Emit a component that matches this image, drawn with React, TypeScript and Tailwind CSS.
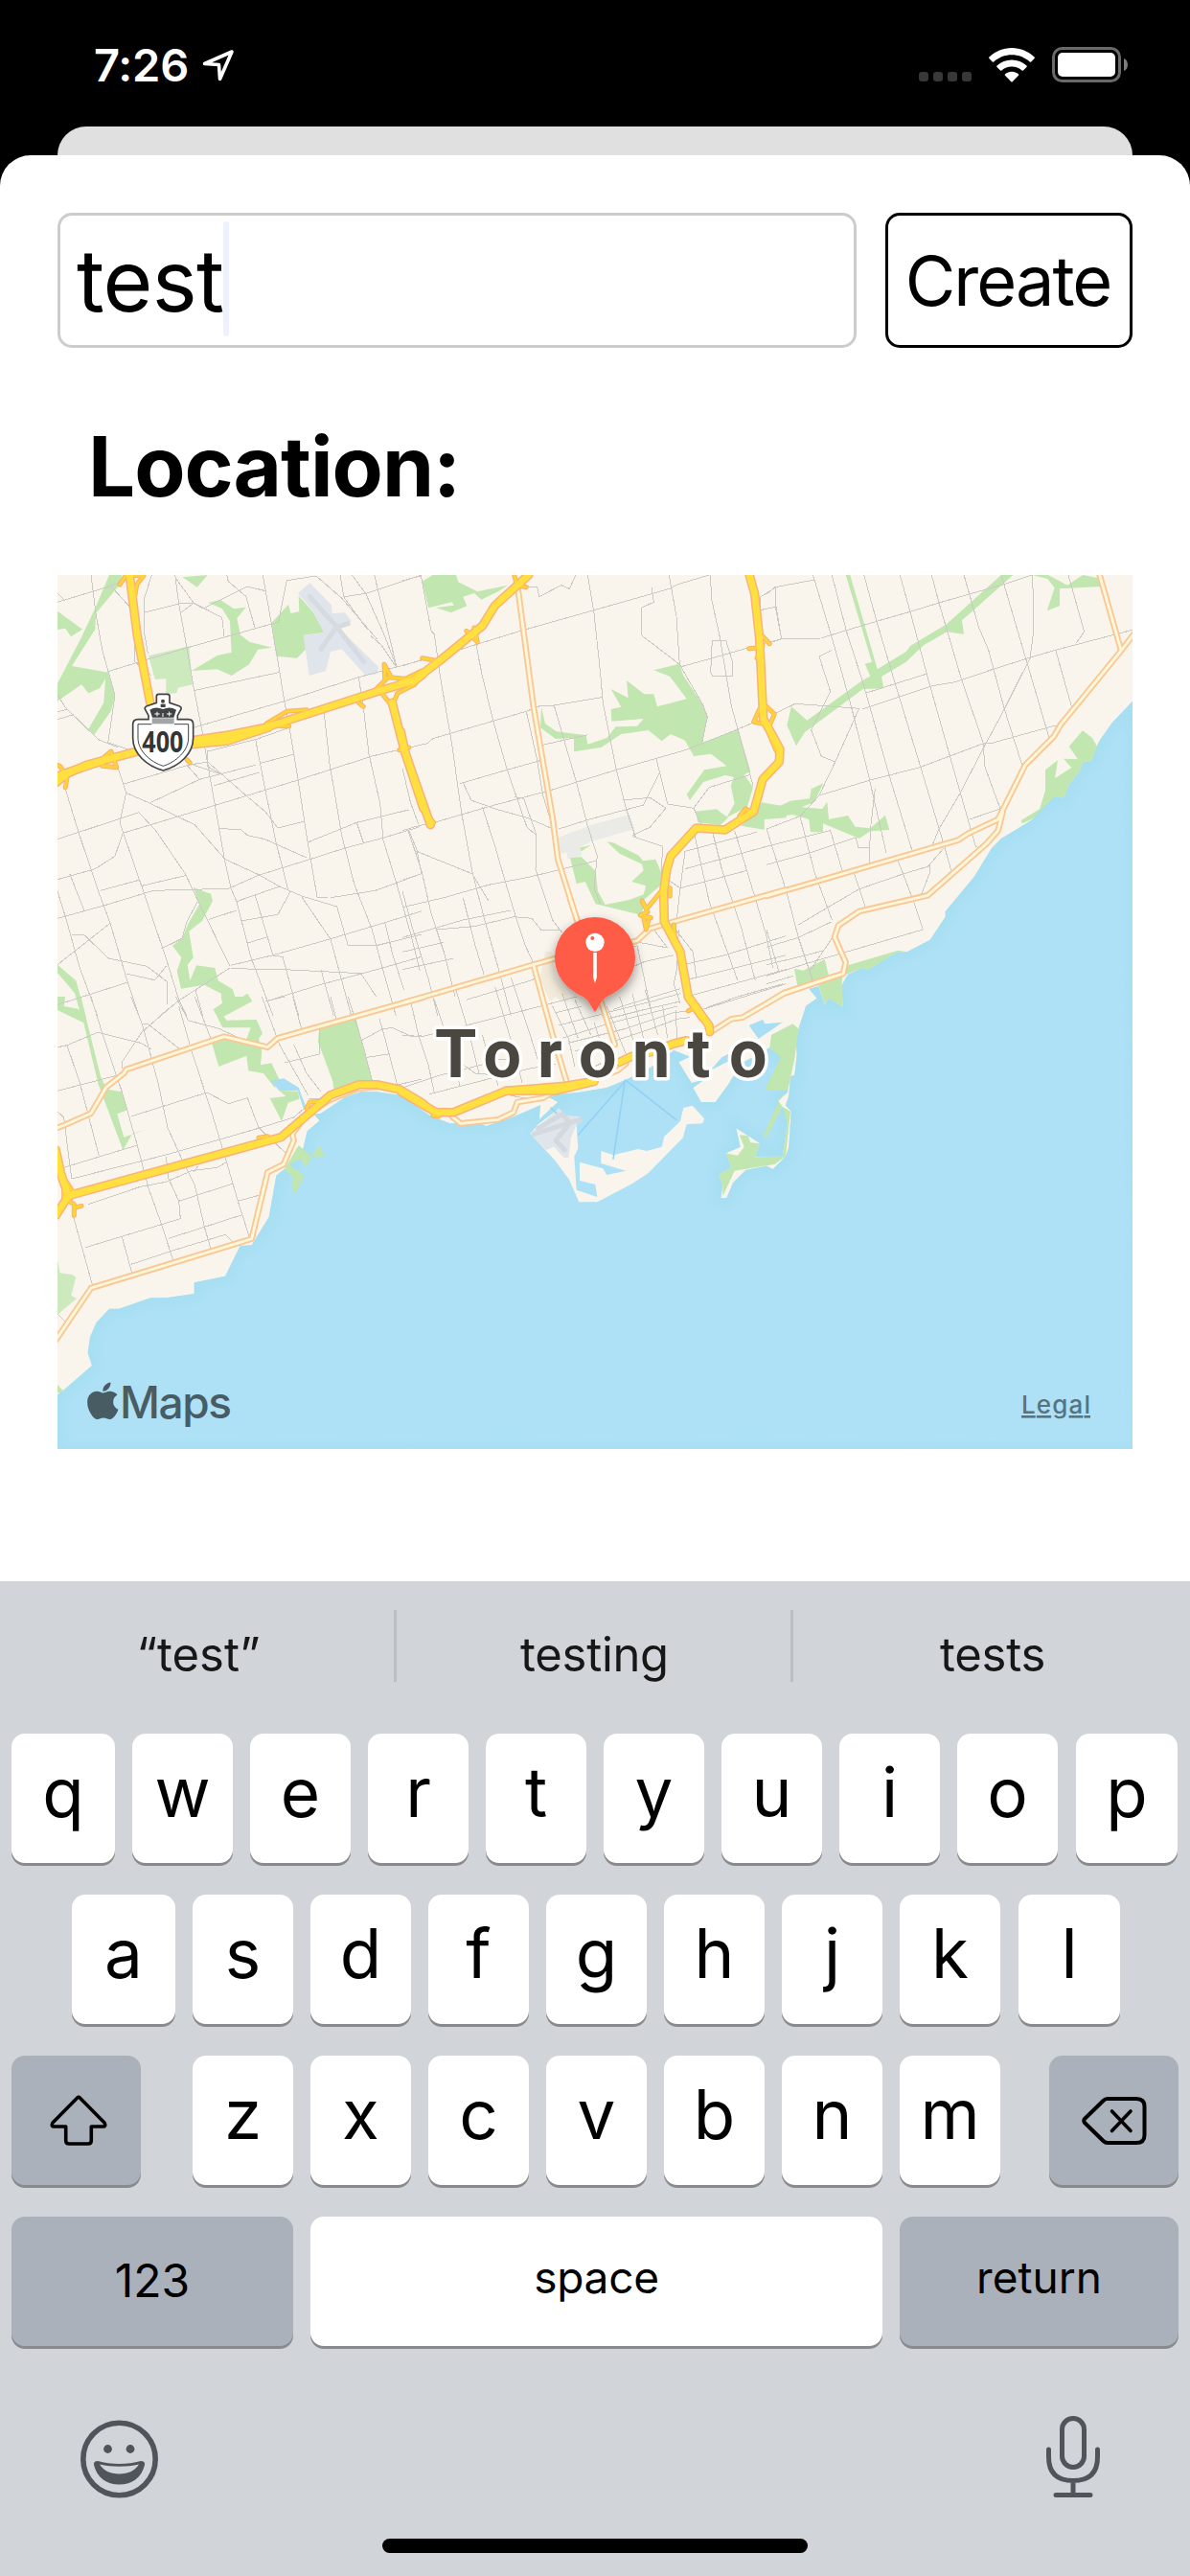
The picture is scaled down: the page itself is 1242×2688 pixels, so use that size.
import React from "react";
import { FaApple } from "react-icons/fa";

type Origin = [number, number];

// Map sections: each one has its own origin and uses third-of-a-pixel units.
const NW: Origin = [40, 590];
const N: Origin = [420, 590];
const NE: Origin = [800, 590];
const SW: Origin = [40, 1040];
const S: Origin = [420, 940];

function at(origin: Origin, pts: string): string {
  return pts
    .trim()
    .split(/\s+/)
    .map((p) => {
      const [x, y] = p.split(",").map(Number);
      return `${(origin[0] + x / 3).toFixed(1)},${(origin[1] + y / 3).toFixed(1)}`;
    })
    .join(" ");
}

type Shape = [Origin, string];

const water = [
  at(NE, "1150,421 1082,493 1045,545 1035,565 1018,613 990,615 980,645 948,685 930,728 902,722 855,765 830,797 735,855 705,885 650,975 560,1083 560,1100 512,1172 440,1210 405,1212 318,1265 300,1260 255,1280 235,1315 240,1382 195,1355 182,1375 163,1318 133,1325 158,1355 125,1378"),
  at(S, "1265,325 1242,395 1232,440 1235,480 1228,545 1215,550 1210,610 1200,640 1217,660 1210,770 1200,800 1160,840 1140,830 1075,843 1035,883 1015,930 997,930 1003,890 990,857 1030,835 1013,790 1058,770 1045,712 1082,735 1120,760 1105,800 1190,800 1205,700 1205,665 1190,645 1175,625 1205,600 1215,500 1190,490 1150,460 1060,510 1020,575 980,630 935,630 910,585 945,560 905,570 865,505 900,488 850,468 780,520 700,560 640,585 550,600 450,610 487,630 428,685 432,640 350,675 262,705 240,695 150,697 90,675 0,612"),
  at(SW, "1140,310 1060,298 1010,298 960,315 885,365 862,368 880,388 842,420 828,480 770,540 745,560 722,690 668,778 632,780 585,875 488,895 488,930 400,943 352,943 252,977 222,977 182,1020 162,1065 155,1115 168,1155 75,1235 55,1250 55,1425"),
  "1190,1516",
].join(" ");

const extraWater: Shape[] = [
  [SW, "728,263 768,256 815,284 838,345 830,350 812,294 754,294"],
  [S, "1085,390 1128,372 1135,385 1190,380 1115,432"],
  [S, "965,530 1000,490 1040,470 1025,500"],
];

const islands: Shape[] = [
  [S, "400,728 425,700 490,650 510,672 545,700 550,775 538,800 545,905 610,927 604,888 555,876 555,818 628,838 640,858 700,845 622,822 622,783 660,796 738,777 765,783 812,770 820,738 870,690 880,648 908,641 945,682 940,697 890,699 878,742 770,852 720,885 610,943 553,943 522,872 480,815"],
  [SW, "862,368 880,388 842,420 800,430 840,370"],
];

const parks: Shape[] = [
  [NW, "222,30 262,30 255,60 180,150 178,200 105,315 60,425 60,370 135,225 180,130"],
  [NW, "60,143 138,200 102,223 85,197 60,201"],
  [NW, "60,375 105,315 220,335 240,405 228,455 175,530 157,512 205,430 210,355 192,385 157,400 135,373 60,425"],
  [NW, "452,37 530,30 497,68"],
  [NW, "532,117 570,108 612,136 650,131 622,165 633,218 662,240 732,257 688,263 660,310 605,345 560,325 480,330 560,282 605,272 603,240 600,175 575,135"],
  [NW, "730,180 783,122 790,150 817,145 815,95 862,148 895,210 830,218 838,262 810,290 745,284"],
  [NW, "485,1008 540,1028 546,1050 513,1113 472,1145 485,1228 467,1250 475,1300 495,1252 553,1260 563,1300 608,1327 620,1362 655,1340 669,1363 580,1410 560,1410 548,1390 577,1370 572,1340 520,1313 447,1325 434,1270 448,1228 420,1190 450,1168 470,1120 505,1060"],
  [SW, "572,0 660,0 669,15 580,62 590,74 683,72 702,115 690,132 700,170 696,214 730,208 755,260 740,285 705,240 658,232 652,185 565,219 543,145 582,126 650,138 665,97 577,97 548,40 577,22"],
  [SW, "754,294 812,296 818,320 782,332 762,390 725,318 775,312"],
  [NW, "60,1250 118,1300 150,1415 135,1415 115,1340 60,1275"],
  [SW, "60,0 85,0 80,30 125,38 140,60 118,0 133,0 195,250 215,290 262,298 280,355 247,367 268,440 340,415 295,428 265,480 188,275 142,82 60,42"],
  [SW, "880,97 995,70 1047,270 925,290 922,265 876,142"],
  [SW, "60,1215 77,1232 68,1242 60,1238"],
  [SW, "815,465 855,500 838,535 820,508 785,525 832,560 803,622 792,585 800,570 770,540"],
  [SW, "882,465 895,500 852,500"],
  [N, "62,50 95,30 168,30 175,52 235,82 330,62 300,82 247,107 225,87 190,98 202,127 152,148 105,132 162,125 155,115 82,133"],
  [N, "435,443 447,495 482,520 575,532 580,560 640,540 668,505 735,503 755,480 655,488 653,450 685,443 653,387 707,415 702,360 757,403 787,403 798,442 890,418 837,347 787,328 867,308 880,345 943,440 955,475 938,555 1052,514 1090,645 1070,655 1098,695 1080,755 1015,790 1040,745 1028,690 1038,662 1010,657 942,678 900,735 890,717 945,640 1015,628 967,590 912,597 885,548 840,528 812,550 770,516 685,528 622,570 537,583 537,540 480,543 432,508"],
  [N, "918,770 983,763 1020,790 995,813 925,805"],
  [N, "1060,815 1100,780 1125,742 1202,755 1202,790 1133,795 1133,827"],
  [N, "525,915 560,912 605,958 612,1020 635,1062 710,1047 755,1030 763,1003 718,990 755,955 750,935 680,902 640,865 660,868 740,908 753,925 793,920 815,972 810,1000 758,1045 750,1095 605,1060 572,990 545,997"],
  [N, "550,885 590,875 560,895"],
  [NE, "248,30 262,30 347,325 437,270 450,252 562,185 735,30 772,30 612,172 618,215 565,208 492,250 437,302 360,348 367,385 302,387 120,522 93,565 64,500 78,442 127,485 300,360 325,347 308,308 330,302"],
  [NE, "832,30 882,30 942,62 990,30 1040,40 1047,66 918,73 918,127 878,142 902,70 880,42"],
  [NE, "0,748 40,754 75,737 135,730 140,700 178,682 150,740 110,757 175,762 190,740 195,795 255,783 278,818 325,823 372,782 385,828 325,832 290,855 177,808 177,835 138,835 133,795 82,780 0,793"],
  [NE, "947,567 990,517 1020,540 1035,567 1018,613 990,615 980,645 948,685 930,728 902,722 830,795 800,808 797,798 855,763 873,705 873,640 912,610 903,667 955,633 930,605 975,607"],
  [NE, "245,1255 412,1205 440,1210 405,1212 318,1265 300,1260 250,1280"],
  [NE, "87,1262 115,1268 182,1233 195,1285 240,1275 235,1315 240,1382 195,1355 182,1372 163,1315 97,1318"],
  [S, "1155,420 1222,385 1240,400 1228,495 1205,600 1175,625 1190,645 1140,740 1128,738 1180,625 1210,595 1135,590 1185,490 1150,460"],
  [S, "1055,733 1082,735 1090,757 1120,760 1105,802 1190,800 1205,700 1192,645 1215,660 1200,800 1165,825 1040,845 1003,925 1003,890 990,857 1030,835 1013,790 1050,797 1070,770"],
];

const softParks: Shape[] = [
  [NW, "345,283 472,253 483,373 437,383 433,400 400,402 400,355 365,357"],
  [SW, "60,825 68,865 105,870 118,878 103,935 120,945 60,995"],
];

const airports: Shape[] = [
  [NW, "813,88 850,55 917,123 920,150 960,148 980,175 945,200 1065,318 1060,340 1025,345 950,262 915,270 900,330 848,345 830,220 893,210 862,145"],
  [S, "400,728 490,650 510,672 555,675 563,690 545,700 528,742 520,805 505,803 475,770 450,780"],
];

const minorRoads: Shape[] = [
  [NW, "165,30 180,150 200,265 220,335 240,405 228,490 218,555 280,575"],
  [NW, "60,115 215,68 265,50"],
  [NW, "60,87 80,108"],
  [NW, "225,62 300,145 300,300 355,345"],
  [NW, "355,30 330,110 330,200 343,275"],
  [NW, "428,30 440,122 465,258 485,375 513,520 530,620 553,750 582,915 603,1010 620,1050 665,1225 735,1410"],
  [NW, "330,148 440,120 487,118 575,163 582,222"],
  [NW, "430,40 487,118 447,147"],
  [NW, "487,118 515,135 655,66 712,80"],
  [NW, "590,30 595,50 650,97 678,195"],
  [NW, "703,30 730,183 755,330 770,425 785,500 810,650 843,865 873,1038 905,1040"],
  [NW, "215,333 345,293 465,258 582,225 752,177 778,47 870,33 950,103 1060,230"],
  [NW, "485,392 752,335"],
  [NW, "485,508 770,425 1003,350 1200,297"],
  [NW, "945,30 957,100 1030,200"],
  [NW, "982,30 1025,88 1080,210 1122,318"],
  [NW, "1052,30 1090,185 1122,318"],
  [NW, "957,98 1030,87 1200,30"],
  [NW, "60,405 85,445 188,545 250,570"],
  [NW, "60,458 92,450"],
  [NW, "60,482 110,467"],
  [NW, "265,685 470,625 530,615 650,720 710,770 750,822 830,802"],
  [NW, "250,635 275,710 255,805 322,1000 400,1230 440,1360 465,1410"],
  [NW, "275,712 350,745 490,812 585,920 690,968 755,1005 825,1035 935,1068 970,1190 1058,1190"],
  [NW, "350,743 505,670 680,625"],
  [NW, "60,857 315,773 370,833 460,965 500,1050 600,1255"],
  [NW, "265,838 550,752 810,673 1045,597 1160,570"],
  [NW, "85,700 125,833 190,1025 225,1120 275,1290 315,1410"],
  [NW, "265,838 240,910 178,950 60,983"],
  [NW, "195,1018 315,985"],
  [NW, "325,1003 465,970"],
  [NW, "98,965 145,1083"],
  [NW, "60,1105 205,1065 360,1018 595,1012 690,970 850,920 960,885 1080,853 1195,818"],
  [NW, "60,1020 85,1100 130,1260 185,1410"],
  [NW, "105,1155 145,1158 220,1230 340,1255 403,1303 403,1375"],
  [NW, "60,1250 225,1120"],
  [NW, "275,1278 365,1298 400,1255"],
  [NW, "60,1375 165,1342 280,1305"],
  [NW, "505,670 465,625"],
  [NW, "548,690 692,648"],
  [NW, "527,583 680,545 785,508"],
  [NW, "680,545 710,700 745,870 782,1015"],
  [NW, "692,620 798,592"],
  [NW, "567,823 635,828 655,845 710,857 840,915"],
  [NW, "895,463 912,620 950,845 990,1000 1045,1140 1080,1270 1120,1410"],
  [NW, "1018,445 1035,590 1070,745 1080,860 1120,990 1165,1150 1195,1270"],
  [NW, "843,867 997,805 1160,765"],
  [NW, "997,805 1018,868"],
  [NW, "915,1040 1055,1018 1195,967"],
  [NW, "1160,830 1185,890 1200,965"],
  [NW, "385,1200 450,1168 465,1115 500,1050"],
  [NW, "535,1108 620,1080"],
  [NW, "620,1052 755,1005"],
  [NW, "635,1113 750,1093 790,1020"],
  [NW, "678,1030 735,1222 765,1225 815,1410"],
  [NW, "655,1182 718,1163"],
  [NW, "603,1252 735,1220 912,1170 1085,1118 1200,1082"],
  [NW, "825,1038 915,1170 980,1410"],
  [NW, "603,1262 770,1265 1010,1277 1058,1350"],
  [NW, "380,1410 440,1362 600,1260"],
  [NW, "712,1365 885,1312 1060,1265 1200,1225"],
  [NW, "885,1265 925,1410"],
  [NW, "1058,1190 1200,1155"],
  [NW, "1085,1118 1110,1220 1145,1330"],
  [NW, "492,1330 515,1410"],
  [NW, "1040,220 1075,250 1118,315"],
  [NW, "1003,350 1018,445"],
  [NW, "530,580 530,630 575,655 487,625"],
  [N, "58,30 90,205 100,215 118,345 155,560 185,775 220,965 260,1120 300,1260 340,1410"],
  [N, "0,48 60,32"],
  [N, "0,315 60,295"],
  [N, "175,265 370,205 600,140 840,72 860,60 960,30"],
  [N, "230,245 250,345 285,490 328,640 390,820 420,845 417,950 470,1110 500,1150"],
  [N, "385,65 422,68 428,98 497,62 523,73 543,30"],
  [N, "580,30 600,150 620,340 628,430 670,640 700,760 730,850"],
  [N, "780,70 787,115 748,133 748,218 868,310 943,440 955,475 938,555"],
  [N, "835,30 858,160 868,310"],
  [N, "965,30 967,100 995,230 1030,440 1050,512 1098,690"],
  [N, "870,318 970,290 1085,257"],
  [N, "970,235 1013,235 1033,300 1033,347 972,347 965,335 970,235"],
  [N, "0,575 78,557 95,542 388,457 430,440 475,438 625,413"],
  [N, "475,438 510,560 545,680 580,815 610,910"],
  [N, "388,457 420,600 440,720 470,820"],
  [N, "440,562 580,530"],
  [N, "180,683 328,640 435,610"],
  [N, "180,683 190,680 215,735 300,765 390,790 460,820 475,820"],
  [N, "100,805 270,755 460,705 670,640 890,577 1052,512 1110,487"],
  [N, "250,755 290,880 325,1000 355,1100 385,1190 410,1245"],
  [N, "350,725 380,730 420,845"],
  [N, "795,605 830,747 912,760 940,820"],
  [N, "690,735 775,727 825,760 775,820 720,845"],
  [N, "805,650 755,750 585,795 490,825"],
  [N, "912,760 960,695 1090,655"],
  [N, "720,848 815,880 810,970 870,1010 1080,955"],
  [N, "0,830 50,815 100,805"],
  [N, "18,830 40,895 62,965 90,1090 130,1210 165,1350"],
  [N, "40,893 218,965 270,1050"],
  [N, "0,985 60,965"],
  [N, "0,1070 130,1040 270,1000 400,975 605,925"],
  [N, "0,1165 190,1110 340,1080"],
  [N, "610,910 600,1010 620,1060"],
  [N, "0,1020 30,1130 80,1290 110,1410"],
  [N, "190,1040 225,1180 255,1280"],
  [N, "105,1140 225,1130 350,1100 405,1105 435,1142 500,1140"],
  [N, "0,1265 160,1230"],
  [N, "0,1210 130,1180"],
  [N, "885,895 1110,835"],
  [N, "885,950 1140,880"],
  [N, "885,895 870,1010 855,1140 910,1210 920,1290"],
  [N, "915,845 960,1050 1010,1190 1050,1300"],
  [N, "970,830 1000,950 1060,1130 1105,1300"],
  [N, "1040,830 1080,960 1140,1160 1160,1260"],
  [N, "865,1140 860,1260 850,1310 870,1370"],
  [N, "740,1180 830,1197 780,1130"],
  [N, "1120,140 1120,100 1167,70 1167,130 1120,140"],
  [N, "1170,130 1187,230 1110,250"],
  [N, "200,1360 400,1300 425,1290"],
  [N, "640,1290 760,1240 850,1220"],
  [N, "700,1200 735,1190 780,1400"],
  [N, "880,1250 1010,1220 1200,1160"],
  [N, "880,1300 1020,1265 1200,1220"],
  [N, "890,1350 1200,1265"],
  [N, "940,1390 1200,1310"],
  [N, "0,635 25,740 50,810"],
  [NE, "0,90 27,68 150,45 145,30"],
  [NE, "27,68 28,130 47,230"],
  [NE, "20,240 47,230 170,228 250,203 345,175 450,145 540,117 635,90 740,60 830,30"],
  [NE, "150,45 200,210 240,350 265,440 320,660 375,900"],
  [NE, "205,30 250,205 300,360 385,660 455,890"],
  [NE, "305,30 345,175 400,360 485,640 560,890 578,955"],
  [NE, "418,30 450,145 510,370 575,600 655,880 665,885"],
  [NE, "517,30 540,117 610,355 680,560"],
  [NE, "618,30 665,195 695,265 745,450 800,625"],
  [NE, "735,30 810,285 885,540"],
  [NE, "833,30 837,200 825,290 745,450 680,570 605,715 540,825 515,885"],
  [NE, "945,30 995,208 970,243"],
  [NE, "300,450 420,410 520,377 590,365 710,325 820,290 905,265 1146,202"],
  [NE, "310,400 500,340"],
  [NE, "905,265 955,440"],
  [NE, "30,462 90,433 290,448 215,615 165,720"],
  [NE, "205,265 165,285 200,395 140,515 172,598 215,615"],
  [NE, "165,720 325,672 480,632 680,557 710,555 890,505 915,500"],
  [NE, "680,557 682,625 732,762 635,795"],
  [NE, "165,720 105,785 0,825"],
  [NE, "105,785 150,960 205,1110"],
  [NE, "0,880 100,855 200,830 240,965"],
  [NE, "0,937 135,900 280,852 287,883 322,883"],
  [NE, "340,700 325,830 322,935"],
  [NE, "410,920 460,1050 490,1140 250,1210 130,1245 0,1285"],
  [NE, "0,825 62,1020 100,1165 145,1300"],
  [NE, "100,1125 190,1072 290,1013 430,965 505,943 555,885"],
  [NE, "275,965 310,1072"],
  [NE, "485,1030 512,960 510,940"],
  [NE, "0,1195 100,1165 205,1115"],
  [NE, "0,1250 125,1220 180,1205"],
  [NE, "0,1140 40,1275"],
  [NE, "210,1160 135,1270"],
  [NE, "0,1310 85,1285"],
  [SW, "60,158 90,152 185,112 320,145 355,165"],
  [SW, "90,152 130,270 190,498"],
  [SW, "165,0 205,130 262,298 310,465 345,600 385,710 422,825"],
  [SW, "60,295 245,247"],
  [SW, "290,0 325,85 375,270 405,410 450,510 490,590 520,720 540,790"],
  [SW, "262,225 262,205 325,110 430,20"],
  [SW, "325,85 345,87 440,162"],
  [SW, "430,0 470,75 560,98 620,125"],
  [SW, "440,30 480,170 545,370 590,520 625,640 660,750"],
  [SW, "490,0 545,145"],
  [SW, "290,375 528,300"],
  [SW, "528,300 595,335 655,317 690,410 775,490"],
  [SW, "80,535 310,465"],
  [SW, "60,360 80,378 98,525 105,570"],
  [SW, "105,570 400,495 690,412 800,378 838,345"],
  [SW, "155,650 320,595 400,580 480,545 560,535 590,518"],
  [SW, "400,500 408,570 440,640 445,695 148,785"],
  [SW, "440,640 610,585"],
  [SW, "485,550 500,530"],
  [SW, "408,757 638,683"],
  [SW, "625,640 690,622"],
  [SW, "290,838 420,795 585,745 608,768"],
  [SW, "262,752 293,865"],
  [SW, "110,690 170,905"],
  [SW, "60,993 85,1018"],
  [SW, "700,0 755,150 845,310"],
  [SW, "797,0 825,105"],
  [SW, "915,0 935,80"],
  [SW, "770,207 880,180 880,97"],
  [SW, "800,150 840,240 885,298"],
  [SW, "712,15 770,0"],
  [SW, "970,0 1020,165 1047,270"],
  [SW, "1010,138 1080,100 1110,98 1170,125 1200,122"],
  [SW, "1068,70 1085,130 1125,280"],
  [SW, "1030,190 1095,180"],
  [SW, "1110,280 1200,258"],
  [SW, "845,320 880,320 925,290"],
  [S, "0,420 60,425 200,390 470,320 545,300"],
  [S, "0,585 120,545 260,510"],
  [S, "25,310 50,420 80,510 100,600"],
  [S, "100,310 150,460 180,580"],
  [S, "165,270 210,420 240,540"],
  [S, "250,420 300,580"],
  [S, "290,270 350,470 375,570"],
  [S, "340,240 400,420 440,550"],
  [S, "85,605 260,560 400,525 480,510"],
  [S, "180,505 230,542 330,545"],
  [S, "298,495 333,495"],
  [S, "470,330 520,430 540,520"],
  [S, "500,290 550,430"],
  [S, "540,310 590,420"],
  [S, "640,330 700,480"],
  [S, "680,300 730,460"],
  [S, "720,290 760,450"],
  [S, "760,280 800,420"],
  [S, "480,350 560,330"],
  [S, "490,390 640,350 780,315 870,290"],
  [S, "500,430 660,380 860,330"],
  [S, "640,370 760,340 870,315"],
  [S, "520,445 700,400 850,350 890,345"],
  [S, "540,470 660,440 780,400 860,370 900,365"],
  [S, "660,340 720,320 870,275"],
  [S, "855,340 860,430"],
  [S, "815,330 830,430"],
  [S, "600,380 640,500"],
  [S, "560,480 610,460 640,500 600,520"],
  [S, "340,610 400,620 450,605"],
  [S, "950,335 1050,300 1190,260"],
];

const arterials: Shape[] = [
  [N, "360,60 410,440 470,790 487,920 550,1120 600,1280"],
  [S, "525,-5 560,100 620,310 665,450"],
  [N, "0,1370 410,1250 480,1230 735,1175 775,1137 840,1118 1200,1015"],
  [S, "410,200 470,420 515,570"],
  [NE, "0,1035 600,860 630,840 725,795 810,625 900,535 920,500 1108,270 1150,215"],
  [NE, "1043,30 1110,265"],
  [NE, "725,795 740,770 725,830 690,870 505,1033 290,1083 225,1127 213,1163 248,1243 240,1278 55,1338 0,1372"],
  [S, "1350,237 1195,290 1065,365 1030,370 965,412"],
  [SW, "1205,2 750,130 718,158 582,125 275,228 268,240 213,283 165,365 80,403 55,412"],
  [SW, "55,1075 165,912 668,758 718,550 768,525 800,450 795,430 840,370"],
  [S, "155,675 182,697 300,685 348,662 360,630 440,617 470,600"],
  [SW, "840,370 910,325 1000,288 1060,282"],
  [S, "600,560 675,530 700,510"],
];

const highways: Shape[] = [
  [NW, "55,680 90,652 150,625 310,582 390,562 600,530 710,508 1060,395 1180,360 1205,340"],
  [NW, "55,662 100,645 200,612"],
  [NW, "480,560 590,550 720,508"],
  [NW, "285,25 310,220 350,430"],
  [NW, "1108,430 1145,575 1205,760"],
  [N, "-5,370 35,360 115,300 250,190 290,125 395,30"],
  [N, "-5,520 10,590 88,812"],
  [N, "1085,25 1103,90 1118,230 1130,480 1182,575 1180,615 1128,670 1100,770 1010,828 920,822 840,910 828,950 818,1020 820,1115 870,1210 895,1350 940,1415"],
  [S, "895,300 960,390 962,410"],
  [SW, "55,685 90,630 105,620 760,440 915,308 1005,275 1060,275 1130,290 1205,335"],
  [SW, "55,480 72,560 95,625"],
  [S, "-5,597 105,662 160,662 325,595 510,580 600,565"],
  [S, "325,595 480,594 600,565"],
  [S, "680,505 715,488 790,470 850,447 890,437"],
];

const ramps: Shape[] = [
  [NW, "255,60 275,30 330,32 308,60 300,110"],
  [NW, "1055,390 1095,350 1150,355 1200,330"],
  [NW, "1085,355 1083,310 1105,350"],
  [NW, "1075,400 1108,440 1125,400 1180,372"],
  [NW, "715,495 778,457 840,452"],
  [NW, "1003,430 1018,442"],
  [NW, "760,503 785,503"],
  [NW, "1130,578 1160,570"],
  [NW, "85,695 90,665 70,630 60,625"],
  [NW, "200,628 245,632 228,582 200,605"],
  [NW, "465,608 475,618"],
  [N, "350,30 358,62 388,68"],
  [N, "200,205 235,240 225,195"],
  [N, "62,290 100,297"],
  [N, "1085,260 1110,258 1128,222 1150,245"],
  [N, "1110,290 1128,250"],
  [N, "1138,440 1165,465 1150,500 1100,490 1118,450"],
  [N, "1145,520 1170,580"],
  [N, "1055,785 1075,762 1088,770"],
  [N, "810,1020 765,1075 750,1050 768,1085 745,1095 778,1103 755,1100 763,1140 772,1105"],
  [N, "838,1010 838,1035"],
  [N, "850,1125 853,1160"],
  [N, "895,1395 925,1378"],
  [N, "60,760 98,805"],
  [SW, "690,442 718,437"],
  [SW, "840,350 850,330 885,328"],
  [SW, "80,560 80,630 112,650 112,685"],
  [SW, "85,575 108,610"],
  [SW, "115,660 135,655"],
  [S, "95,672 115,675"],
];

const ferries: Shape[] = [
  [S, "700,562 550,733"],
  [S, "697,562 660,808"],
  [S, "700,562 857,685"],
  [S, "465,648 483,665"],
];

function Lines({ data, color, width, crisp }: { data: Shape[]; color: string; width: number; crisp?: boolean }) {
  return (
    <g fill="none" stroke={color} strokeWidth={width} strokeLinejoin="round" strokeLinecap={crisp ? "butt" : "round"} shapeRendering={crisp ? "crispEdges" : "auto"}>
      {data.map(([o, p], i) => (
        <polyline key={i} points={at(o, p)} />
      ))}
    </g>
  );
}

function Areas({ data, color }: { data: Shape[]; color: string }) {
  return (
    <g fill={color}>
      {data.map(([o, p], i) => (
        <polygon key={i} points={at(o, p)} />
      ))}
    </g>
  );
}

function Shield() {
  return (
    <g transform="translate(40 590) scale(.33333)">
      <path
        d="M377 403H404Q411 403 411 410V430L441 440Q449 443 447 450L436 470V482H470Q485 482 485 498V540C485 590 442 628 391 642C340 628 296 590 296 540V498Q296 482 312 482H345V470L334 450Q332 443 340 440L370 430V410Q370 403 377 403Z"
        fill="#fff"
        stroke="#404244"
        strokeWidth="5"
      />
      <path d="M355 497H312V540C312 580 350 615 391 628C432 615 470 580 470 540V497H426" fill="none" stroke="#404244" strokeWidth="3" />
      <path d="M349 452Q368 440 390 450Q412 440 432 452L424 476H357Z" fill="#404244" />
      <path d="M356 478H425V496H356Z" fill="#a4a5a6" />
      <path d="M372 458V472M364 465H380M410 458V472M402 465H418M390 462V474" stroke="#fff" strokeWidth="3" />
      <circle cx="390" cy="425" r="6" fill="#404244" />
      <path d="M383 434H398V444H383Z" fill="#404244" />
      <text x="325" y="584" textLength="129" lengthAdjust="spacingAndGlyphs" fill="#333537" className="font-['Open_Sans'] text-[89px] font-bold">
        400
      </text>
    </g>
  );
}

function MapView() {
  const letters: [string, number][] = [["T", 454], ["o", 504.5], ["r", 561], ["o", 604], ["n", 660], ["t", 717.5], ["o", 761]];
  return (
    <svg viewBox="60 600 1122 912" className="block h-[912px] w-[1122px] bg-[#f9f5ed]" role="img" aria-label="Map of Toronto">
      <defs>
        <filter id="pinShadow" x="-50%" y="-50%" width="200%" height="200%">
          <feDropShadow dx="0" dy="16" stdDeviation="18" floodColor="#000" floodOpacity=".4" />
        </filter>
        <clipPath id="lake">
          <polygon points={water} />
        </clipPath>
        <filter id="soft">
          <feGaussianBlur stdDeviation="6" />
        </filter>
      </defs>
      <Areas data={softParks} color="#cdeabf" />
      <polygon points={water} fill="#aee1f5" />
      <g clipPath="url(#lake)">
        <polygon points={water} fill="none" stroke="#a6def2" strokeWidth="14" filter="url(#soft)" />
      </g>
      <Areas data={islands} color="#f9f5ed" />
      <Areas data={parks} color="#c1e6b0" />
      <Areas data={extraWater} color="#a9def4" />
      <Areas data={airports} color="#dfe5ea" />
      <Areas data={[[N, "487,852 600,810 712,780 726,825 590,865 556,882 562,908 517,917 515,898 495,902"]]} color="#eaeae7" />
      <Areas data={[[S, "447,160 468,158 480,240 520,300 520,317 500,315 480,300 462,315 430,240"]]} color="#f2ebda" />
      <Lines data={[[NW, "850,98 932,190 1020,302"], [NW, "885,262 932,195 970,182"]]} color="#d5dbe0" width={5} />
      <Lines data={[[S, "412,730 555,685"], [S, "425,712 500,668 525,695 480,750 508,780"]]} color="#d3d9de" width={5} />
      <Lines data={ferries} color="#91d1f5" width={1.5} />
      <Lines data={minorRoads} color="#cbc9c3" width={1} crisp />
      <Lines data={arterials} color="#f8c898" width={6.6} />
      <Lines data={arterials} color="#fff8d8" width={2.8} />
      <Lines data={ramps} color="#f8b06c" width={5} />
      <Lines data={highways} color="#f8b27c" width={9.6} />
      <Lines data={ramps} color="#ffd23a" width={3} />
      <Lines data={highways} color="#ffe03f" width={6.6} />
      <Shield />
      <g fill="#4a4640" stroke="#fff" strokeWidth="7" strokeLinejoin="round" paintOrder="stroke" className="font-['Roboto'] text-[70px] font-bold">
        <text y="1124" x={letters.map((l) => l[1]).join(" ")}>
          {letters.map((l) => l[0]).join("")}
        </text>
      </g>
      <g transform="translate(420 940) scale(.33333)">
        <path d="M603 348C596 342 588 316 569 302C515 278 477 236 477 177A126 126 0 0 1 729 177C729 236 691 278 637 302C618 316 610 342 603 348Z" fill="#ff5b47" filter="url(#pinShadow)" />
        <circle cx="603" cy="130" r="29" fill="#fff" />
        <circle cx="595" cy="117" r="6" fill="#ff5b47" />
        <path d="M597.500 162H608.500V240L603 258L597.500 240Z" fill="#fff" />
      </g>
      <g transform="translate(90.800 1439.800)">
        <FaApple size={44} width={33} height={44} color="#485c64" style={{ width: 33, height: 44 }} />
      </g>
      <text x="125" y="1480" fill="#485c64" textLength="117" className="font-['Inter'] text-[46px] font-medium">
        Maps
      </text>
      <text x="1066" y="1475" fill="#58737e" textLength="72" className="font-['Inter'] text-[26px] font-medium underline decoration-[3px] underline-offset-[1px]">
        Legal
      </text>
    </svg>
  );
}

function StatusBar() {
  return (
    <div className="flex h-[132px] items-start justify-between bg-black pl-[98px] pr-[64px] text-white">
      <div className="flex items-center gap-[13px] pt-[40px]">
        <span className="w-[100px] text-[47px] leading-[56px] font-semibold tracking-[-0.200px] whitespace-nowrap">7:26</span>
        <svg viewBox="0 0 34 34" className="h-[34px] w-[34px]" fill="none" stroke="#fff" strokeWidth="3.600" strokeLinejoin="round">
          <path d="M31 3L2.500 15.500L17.500 16.500L18.500 31.500Z" />
        </svg>
      </div>
      <div className="mt-[49px] flex h-[37px] items-end">
        <div className="mr-[18px] flex gap-[5px] pb-[1px]">
          {[0, 1, 2, 3].map((i) => (
            <span key={i} className="h-[10px] w-[10px] rounded-[3px] bg-[#383838]" />
          ))}
        </div>
        <svg viewBox="0 0 48 36" className="mr-[18px] h-[36px] w-[48px]" fill="#fff">
          <path d="M24 0C33 0 41.500 3.500 47.600 9.600Q48.200 10.300 47.600 11L44.200 14.400Q43.500 15 42.800 14.400C37.700 9.800 31 7.200 24 7.200C17 7.200 10.300 9.800 5.200 14.400Q4.500 15 3.800 14.400L.4 11Q-.2 10.300 .4 9.600C6.500 3.500 15 0 24 0Z" />
          <path d="M24 12.500C29.800 12.500 35.300 14.700 39.500 18.600Q40.200 19.300 39.500 20L36 23.500Q35.300 24 34.600 23.500C31.700 20.900 28 19.500 24 19.500C20 19.500 16.300 20.900 13.400 23.500Q12.700 24 12 23.500L8.500 20Q7.800 19.300 8.500 18.600C12.700 14.700 18.200 12.500 24 12.500Z" />
          <path d="M24 24.800C26.600 24.800 29 25.800 31 27.300Q31.700 28 31 28.700L24.700 35.200Q24 35.800 23.300 35.200L17 28.700Q16.300 28 17 27.300C19 25.800 21.400 24.800 24 24.800Z" />
        </svg>
        <svg viewBox="0 0 80 37" className="h-[37px] w-[80px]">
          <rect x="1.500" y="1.500" width="69" height="34" rx="9" fill="none" stroke="#6a6a6a" strokeWidth="3" />
          <rect x="6" y="6" width="60" height="25" rx="5" fill="#fff" />
          <path d="M75 12C80.300 14 80.300 23 75 25Z" fill="#7d7d7d" />
        </svg>
      </div>
    </div>
  );
}

const keyBase = "flex h-[135px] items-center justify-center shadow-[0_3px_0_#898a8e] rounded-[14px]";

function Letter({ c, w }: { c: string; w: string }) {
  return <div className={`${keyBase} ${w} bg-white pb-[13px] text-[71px] leading-none font-normal text-black`}>{c}</div>;
}

function Letters({ row, firstWide, lastWide }: { row: string; firstWide?: boolean; lastWide?: boolean }) {
  return (
    <>
      {row.split("").map((c, i) => (
        <Letter key={c} c={c} w={i === 0 && firstWide ? "w-[108px]" : i === row.length - 1 && lastWide ? "w-[106px] ml-[1px]" : "w-[105px]"} />
      ))}
    </>
  );
}

function Keyboard() {
  return (
    <div className="flex h-[1038px] flex-col bg-[#d1d4d9]">
      <div className="flex h-[159px] items-start text-[49px] leading-[60px] text-[#161717]">
        <div className="mt-[30px] flex h-[75px] w-[414px] justify-center border-r-[3px] border-[#bbbfc4] pt-[17px] pl-[3px]">“test”</div>
        <div className="mt-[30px] flex h-[75px] w-[414px] justify-center border-r-[3px] border-[#bbbfc4] pt-[17px] pl-[2px] tracking-[-0.300px]">testing</div>
        <div className="mt-[30px] flex h-[75px] w-[414px] justify-center pt-[17px] pl-[2px] tracking-[-0.300px]">tests</div>
      </div>
      <div className="flex flex-col gap-[33px] pr-[12px] pl-[12px]">
        <div className="flex gap-[18px]">
          <Letters row="qwertyuiop" firstWide lastWide />
        </div>
        <div className="flex gap-[18px] pl-[63px]">
          <Letters row="asdfghjkl" firstWide lastWide />
        </div>
        <div className="flex justify-between">
          <div className={`${keyBase} w-[135px] bg-[#abb1bb]`}>
            <svg viewBox="0 0 60 54" className="ml-[4px] h-[54px] w-[60px]" fill="none" stroke="#000" strokeWidth="3.600" strokeLinejoin="round">
              <path d="M28.700 3Q30 1.500 31.300 3L57 29Q59 33 55.500 33H43.300V47.500Q43.300 51 40 51H20Q16.700 51 16.700 47.500V33H4.500Q1 33 3 29Z" />
            </svg>
          </div>
          <div className="flex gap-[18px] pl-[3px]">
            <Letters row="zxcvbnm" />
          </div>
          <div className={`${keyBase} w-[135px] bg-[#abb1bb]`}>
            <svg viewBox="0 0 68 52" className="h-[52px] w-[68px]" fill="none" stroke="#000" strokeWidth="4" strokeLinejoin="round" strokeLinecap="round">
              <path d="M27 3H57Q65.500 3 65.500 11V41Q65.500 49 57 49H27Q24.500 49 22.500 47L3 28Q1.500 26 3 24L22.500 5Q24.500 3 27 3Z" />
              <path d="M31.500 16L51 36.500M51 16L31.500 36.500" strokeWidth="3.600" />
            </svg>
          </div>
        </div>
        <div className="flex gap-[18px] text-[46px] leading-none text-black">
          <div className={`${keyBase} w-[294px] bg-[#abb1bb] pb-[2px] text-[48px]`}>123</div>
          <div className={`${keyBase} w-[597px] bg-white pb-[10px] tracking-[-0.300px]`}>space</div>
          <div className={`${keyBase} w-[291px] bg-[#abb1bb] pb-[10px]`}>return</div>
        </div>
      </div>
      <div className="flex justify-between pr-[93px] pl-[84px] pt-[73px]">
        <svg viewBox="0 0 82 82" className="mt-[4px] h-[82px] w-[82px]" fill="none" stroke="#50555c" strokeWidth="5.600">
          <circle cx="40.500" cy="41" r="37.700" />
          <circle cx="28.500" cy="30.500" r="4.400" fill="#50555c" stroke="none" />
          <circle cx="52" cy="30.500" r="4.400" fill="#50555c" stroke="none" />
          <path fillRule="evenodd" d="M18 43C32 47 49 47 63 43Q67.500 43 67 47C64 60 54 67.500 40.500 67.500C27 67.500 17 60 14 47Q13.500 43 18 43ZM20 46.500C24 53 31 56.500 40.500 56.500C50 56.500 57 53 61 46.500C48 49.500 33 49.500 20 46.500Z" fill="#50555c" stroke="none" />
        </svg>
        <svg viewBox="0 0 58 86" className="h-[86px] w-[58px]" fill="none" stroke="#50555c" strokeWidth="5" strokeLinecap="round">
          <rect x="17.500" y="2.500" width="23" height="51" rx="11.500" />
          <path d="M3.500 35V43Q3.500 67.500 29 67.500Q54.500 67.500 54.500 43V35M29 68V81M11 82.500H47" />
        </svg>
      </div>
      <div className="mt-[42px] ml-[399px] h-[15px] w-[444px] rounded-full bg-black" />
    </div>
  );
}

export default function App() {
  return (
    <div className="flex h-[2688px] w-[1242px] flex-col overflow-hidden bg-black font-['Inter',sans-serif]">
      <StatusBar />
      <div className="mx-[60px] h-[30px] rounded-t-[30px] bg-[#e0e0e0]" />
      <div className="flex h-[1488px] flex-col rounded-t-[32px] bg-white px-[60px] pt-[60px] text-black">
        <div className="flex h-[141px] justify-between">
          <div className="flex w-[834px] items-center rounded-[15px] border-[3px] border-[#ccc] pl-[17px]">
            <span className="w-[153px] text-[89px] leading-none tracking-[-0.700px] whitespace-nowrap">test</span>
            <span className="mb-[4px] h-[120px] w-[6px] rounded-full bg-[#eef1ff]" />
          </div>
          <div className="flex w-[258px] items-center justify-center rounded-[15px] border-[3px] border-black pr-[2px] text-[72px] leading-none tracking-[-2px]">Create</div>
        </div>
        <h1 className="mt-[62px] h-[175px] pl-[32px] text-[87px] leading-[124px] font-bold tracking-[-1px]">Location:</h1>
        <MapView />
      </div>
      <Keyboard />
    </div>
  );
}
